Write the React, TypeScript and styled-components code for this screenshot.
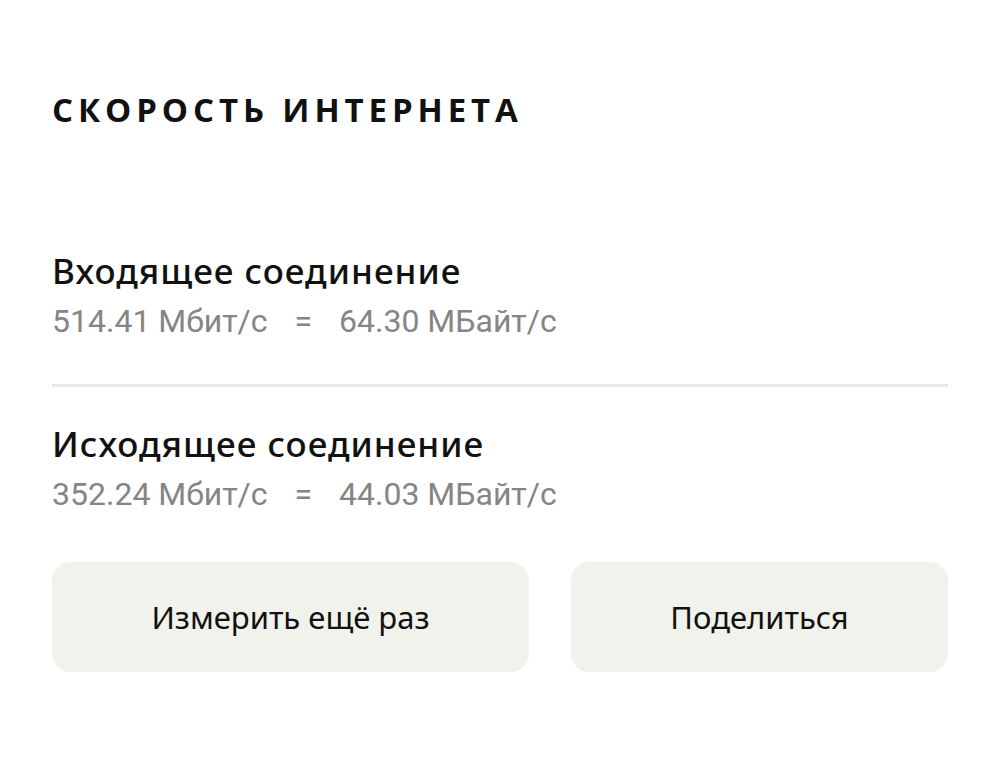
import React from 'react';
import styled, {createGlobalStyle} from 'styled-components';

const GlobalStyle = createGlobalStyle`
    html, body {
        margin: 0;
        padding: 0;
        background: #ffffff;
    }
    body {
        font-family: Roboto, "Noto Sans", sans-serif;
    }
`;

const results = [
    {title: 'Входящее соединение', mbit: '514.41', mbyte: '64.30'},
    {title: 'Исходящее соединение', mbit: '352.24', mbyte: '44.03'},
];

const App: React.FunctionComponent = () => {
    return (
        <Wrapper>
            <GlobalStyle/>
            <Title>Скорость интернета</Title>
            <Results>
                {results.map((item, index) => (
                    <React.Fragment key={item.title}>
                        {index > 0 && <Divider/>}
                        <Section>
                            <Heading>{item.title}</Heading>
                            <Value>
                                <span>{item.mbit} Мбит/с</span>
                                <span>=</span>
                                <span>{item.mbyte} МБайт/с</span>
                            </Value>
                        </Section>
                    </React.Fragment>
                ))}
            </Results>
            <Actions>
                <Button>Измерить ещё раз</Button>
                <Button>Поделиться</Button>
            </Actions>
        </Wrapper>
    );
}

const Wrapper = styled.div`
    width: 1000px;
    height: 775px;
    box-sizing: border-box;
    padding: 90px 52px 0;
    display: flex;
    flex-direction: column;
`;

const Title = styled.h1`
    margin: 0;
    font-family: "Open Sans", sans-serif;
    font-weight: 700;
    font-size: 33px;
    line-height: 40px;
    letter-spacing: 4.9px;
    text-transform: uppercase;
    color: #111111;
    white-space: nowrap;
`;

const Results = styled.div`
    margin-top: 120px;
    display: flex;
    flex-direction: column;
`;

const Section = styled.div`
    display: flex;
    flex-direction: column;
    gap: 10px;
`;

const Heading = styled.div`
    font-family: "Noto Sans", sans-serif;
    font-size: 35px;
    line-height: 42px;
    font-weight: 500;
    letter-spacing: 1px;
    color: #111111;
    white-space: nowrap;
`;

const Value = styled.div`
    display: flex;
    gap: 27px;
    font-size: 32px;
    line-height: 38px;
    color: #858585;
    white-space: nowrap;
`;

const Divider = styled.div`
    height: 3px;
    background: #e8e8e8;
    margin: 44px 0 36px;
`;

const Actions = styled.div`
    margin-top: 49px;
    display: grid;
    grid-template-columns: 477px 1fr;
    gap: 42px;
`;

const Button = styled.button`
    height: 110px;
    border: none;
    border-radius: 18px;
    background: #f2f2ec;
    font-family: "Comic Sans MS", "Noto Sans", sans-serif;
    font-size: 31px;
    color: #111111;
    cursor: pointer;
`;

export default App;
